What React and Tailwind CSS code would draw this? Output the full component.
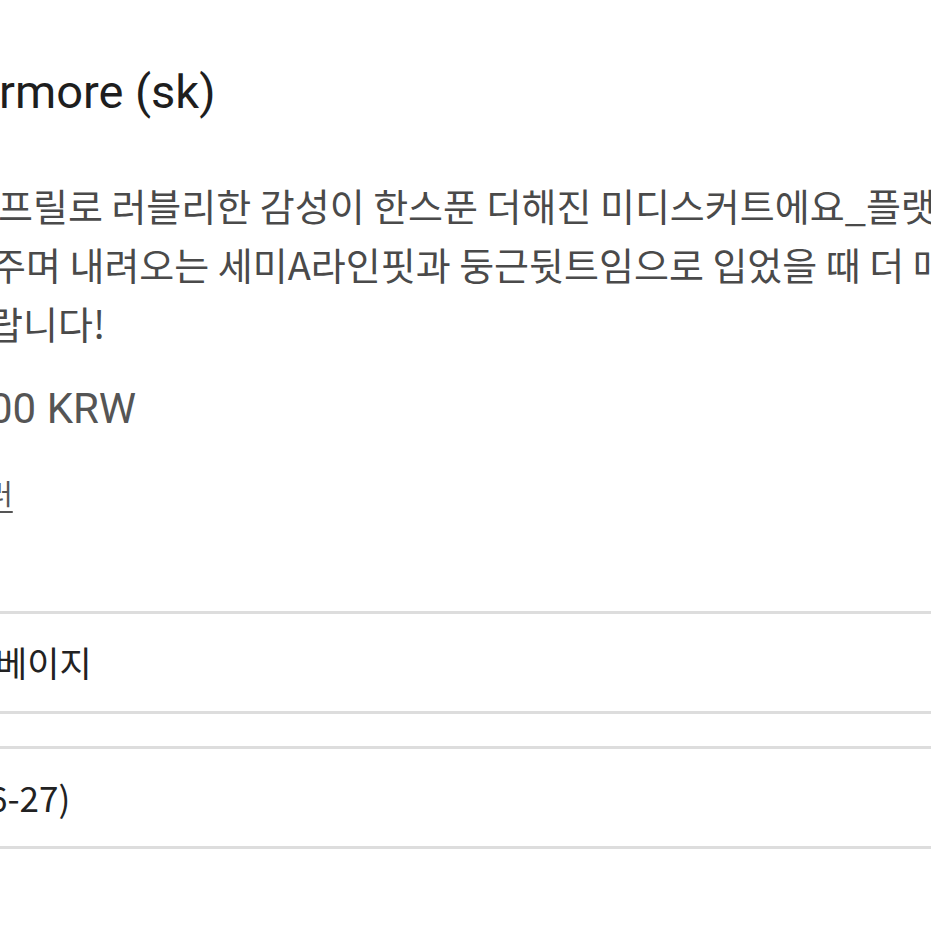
export default function App() {
  const kr = { fontFamily: '"Noto Sans CJK KR", "Noto Sans", sans-serif' };
  const rb = { fontFamily: 'Roboto, "Noto Sans CJK KR", sans-serif' };

  return (
    <div className="w-[931px] h-[931px] overflow-hidden bg-white">
      {/* title */}
      <div className="mt-[64px] whitespace-nowrap overflow-hidden">
        <h1 style={rb} className="-ml-[1px] text-[47px] leading-[56px] font-normal text-[#1e1e1e]">
          rmore (sk)
        </h1>
      </div>

      {/* description */}
      <div style={kr} className="mt-[55px] text-[38px] leading-[59px] text-[#4a4a4a] whitespace-nowrap overflow-hidden">
        <p className="-ml-[2px]">프릴로 러블리한 감성이 한스푼 더해진 미디스커트에요_플랫하게 허리를 잡</p>
        <p className="-ml-[9px]">주며 내려오는 세미A라인핏과 둥근뒷트임으로 입었을 때 더 매력적인 디자인</p>
        <p className="-ml-[12px]">랍니다!</p>
      </div>

      {/* price */}
      <div className="mt-[32px] whitespace-nowrap overflow-hidden">
        <p style={rb} className="-ml-[11px] text-[42px] leading-[50px] text-[#555555]">00 KRW</p>
      </div>

      {/* link */}
      <div className="mt-[39px] whitespace-nowrap overflow-hidden">
        <a style={kr} className="block -ml-[13px] text-[28px] leading-[40px] text-[#555555] underline underline-offset-[6px]">
          러
        </a>
      </div>

      {/* option rows */}
      <div style={kr} className="mt-[98px] flex flex-col gap-[32px]">
        <div className="h-[103px] border-y-[3px] border-[#dddddd] flex items-center overflow-hidden whitespace-nowrap">
          <span className="-ml-[5px] text-[35px] text-[#222222]">베이지</span>
        </div>
        <div className="h-[103px] border-y-[3px] border-[#dddddd] flex items-center overflow-hidden whitespace-nowrap">
          <span className="-ml-[12px] text-[35px] text-[#222222]">6-27)</span>
        </div>
      </div>
    </div>
  );
}
